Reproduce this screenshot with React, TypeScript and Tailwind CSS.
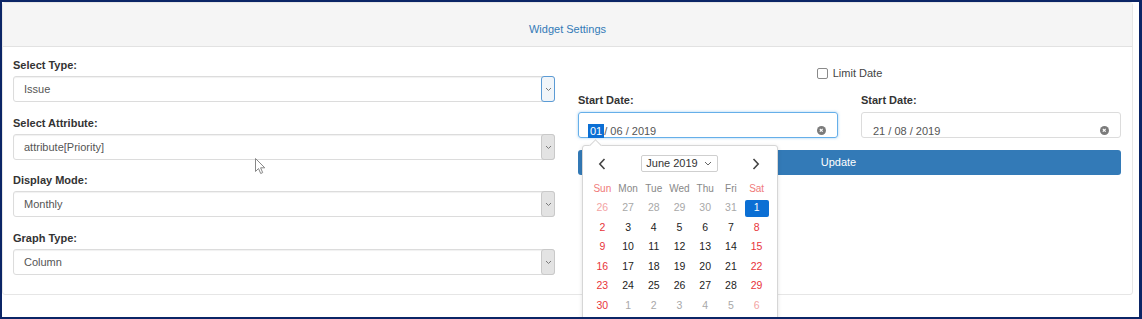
import React from "react";

const SelChevron = () => (
  <svg width="7" height="5" viewBox="0 0 7 5">
    <path d="M1 1l2.5 2.5L6 1" fill="none" stroke="#7a7a7a" strokeWidth="1" />
  </svg>
);

function Select({ value, focused }: { value: string; focused?: boolean }) {
  return (
    <div className="h-[26px] flex items-stretch border border-[#dcdcdc] rounded-[3px] shadow-[inset_0_1px_1px_rgba(0,0,0,0.06)] bg-white">
      <div className="flex-1 flex items-center pl-[10px] text-[11px] text-[#555]">{value}</div>
      <div
        className={
          focused
            ? "w-[14px] -my-px -mr-px border border-[#5b9bd5] rounded-[3px] bg-[#f1f5f9] flex items-center justify-center"
            : "w-[14px] -my-px -mr-px border border-[#c9c9c9] rounded-[3px] bg-[#e3e3e3] flex items-center justify-center"
        }
      >
        <SelChevron />
      </div>
    </div>
  );
}

const ClearIcon = () => (
  <svg width="9" height="9" viewBox="0 0 9 9">
    <circle cx="4.5" cy="4.5" r="4.5" fill="#7b7b7b" />
    <path d="M2.8 2.8l2.9 2.9M5.7 2.8L2.8 5.7" stroke="#fff" strokeWidth="1.2" />
  </svg>
);

type Day = { n: number; other?: boolean; sel?: boolean };

const rows: Day[][] = [
  [{ n: 26, other: true }, { n: 27, other: true }, { n: 28, other: true }, { n: 29, other: true }, { n: 30, other: true }, { n: 31, other: true }, { n: 1, sel: true }],
  [2, 3, 4, 5, 6, 7, 8].map((n) => ({ n })),
  [9, 10, 11, 12, 13, 14, 15].map((n) => ({ n })),
  [16, 17, 18, 19, 20, 21, 22].map((n) => ({ n })),
  [23, 24, 25, 26, 27, 28, 29].map((n) => ({ n })),
  [{ n: 30 }, { n: 1, other: true }, { n: 2, other: true }, { n: 3, other: true }, { n: 4, other: true }, { n: 5, other: true }, { n: 6, other: true }],
];

const dayNames = ["Sun", "Mon", "Tue", "Wed", "Thu", "Fri", "Sat"];

function Calendar() {
  return (
    <div className="absolute left-[580px] top-[143px] w-[196px] h-[200px] bg-white border border-[#d6d6d6] rounded-[3px] shadow-[0_1px_4px_rgba(0,0,0,0.12)] font-['Liberation_Sans',Arial,sans-serif]">
      <div className="absolute left-[8px] -top-[5px] w-[9px] h-[9px] bg-white border-t border-l border-[#d6d6d6] rotate-45" />
      <div className="relative flex items-center justify-between h-[17px] mt-[9px] pl-[15px] pr-[17px]">
        <svg width="8" height="12" viewBox="0 0 8 12">
          <path d="M6.5 1L1.8 6l4.7 5" fill="none" stroke="#444" strokeWidth="1.6" />
        </svg>
        <div className="w-[77px] h-[17px] border border-[#cfcfcf] rounded-[2px] flex items-center justify-center gap-[6px] text-[11px] text-[#333]">
          <span>June 2019</span>
          <svg width="8" height="5" viewBox="0 0 8 5">
            <path d="M1 1l3 3 3-3" fill="none" stroke="#666" strokeWidth="1" />
          </svg>
        </div>
        <svg width="8" height="12" viewBox="0 0 8 12">
          <path d="M1.5 1L6.2 6l-4.7 5" fill="none" stroke="#444" strokeWidth="1.6" />
        </svg>
      </div>
      <div className="ml-[6.5px] mt-[6.75px] w-[180px] grid grid-cols-7">
        {dayNames.map((d, i) => (
          <div
            key={d}
            className={
              "h-[19.5px] flex items-center justify-center text-[10px] " +
              (i === 0 || i === 6 ? "text-[#f07a7a]" : "text-[#888]")
            }
          >
            {d}
          </div>
        ))}
        {rows.map((r, ri) =>
          r.map((d, i) => {
            const weekend = i === 0 || i === 6;
            let color = "text-[#222]";
            if (d.other) color = weekend ? "text-[#f3a3a3]" : "text-[#a8a8a8]";
            else if (weekend) color = "text-[#e8343a]";
            return (
              <div key={ri + "-" + i} className="h-[19.5px] flex items-center justify-center text-[10.5px]">
                {d.sel ? (
                  <span className="w-[24px] h-[17px] rounded-[2px] bg-[#0b6fd4] text-white flex items-center justify-center">
                    {d.n}
                  </span>
                ) : (
                  <span className={color}>{d.n}</span>
                )}
              </div>
            );
          })
        )}
      </div>
    </div>
  );
}

const groups: { label: string; value: string; focused: boolean; mb: string }[] = [
  { label: "Select Type:", value: "Issue", focused: true, mb: "mb-[14px]" },
  { label: "Select Attribute:", value: "attribute[Priority]", focused: false, mb: "mb-[13px]" },
  { label: "Display Mode:", value: "Monthly", focused: false, mb: "mb-[14px]" },
  { label: "Graph Type:", value: "Column", focused: false, mb: "mb-[14px]" },
];

export default function App() {
  return (
    <div className="relative w-[1142px] h-[319px] box-border overflow-hidden bg-white border-[#0b2566] border-t-2 border-l-2 border-r-[3px] border-b-2 font-['Liberation_Sans',Arial,sans-serif] text-[#333]">
      <div className="mr-[6px] h-[293px] border border-[#e6e6e6] rounded-[3px]">
        <div className="h-[44px] box-border bg-[#f5f5f5] border-b border-[#e2e2e2] flex justify-center pt-[19px] text-[11px] leading-[14px] text-[#337ab7]">
          Widget Settings
        </div>
        <div className="flex gap-[23px] px-[10px]">
          <div className="w-[542px] pt-[11px]">
            {groups.map((g) => (
              <div key={g.label} className={g.mb}>
                <div className="text-[11px] leading-[14px] font-bold text-[#333] mb-[4px]">{g.label}</div>
                <Select value={g.value} focused={g.focused} />
              </div>
            ))}
          </div>
          <div className="w-[543px] pt-[19px]">
            <div className="h-[14px] flex items-center justify-center gap-[5px]">
              <div className="w-[11px] h-[11px] border border-[#8a8a8a] rounded-[2px] bg-white" />
              <span className="text-[11px] text-[#444]">Limit Date</span>
            </div>
            <div className="mt-[13px] flex gap-[23px]">
              <div className="w-[260px]">
                <div className="text-[11px] leading-[14px] font-bold text-[#333] mb-[5px]">Start Date:</div>
                <div className="h-[26px] box-border border border-[#66afe9] rounded-[3px] shadow-[0_0_3px_rgba(102,175,233,0.6)] flex items-center pt-[12px] pl-[9px] pr-[11px] text-[11px] leading-[12px] text-[#555]">
                  <span className="flex-1">
                    <span className="bg-[#0b6fd4] text-white px-[2px] py-px">01</span>
                    <span>/ 06 / 2019</span>
                  </span>
                  <span className="-mt-[1px]"><ClearIcon /></span>
                </div>
              </div>
              <div className="w-[260px]">
                <div className="text-[11px] leading-[14px] font-bold text-[#333] mb-[5px]">Start Date:</div>
                <div className="h-[26px] box-border border border-[#dcdcdc] rounded-[3px] flex items-center pt-[12px] pl-[11px] pr-[11px] text-[11px] leading-[12px] text-[#555]">
                  <span className="flex-1">21 / 08 / 2019</span>
                  <span className="-mt-[1px]"><ClearIcon /></span>
                </div>
              </div>
            </div>
            <div className="mt-[12px] h-[25px] rounded-[3px] bg-[#337ab7] flex items-center justify-center pr-[22px] text-[11px] text-white">
              Update
            </div>
          </div>
        </div>
      </div>
      <Calendar />
      <svg className="absolute left-[253px] top-[156px]" width="12" height="18" viewBox="0 0 12 18">
        <path d="M0.5 0.5v13l3-3 2.2 5 2-0.9-2.1-4.8h4.2z" fill="#fff" stroke="#888" strokeWidth="1" />
      </svg>
    </div>
  );
}
